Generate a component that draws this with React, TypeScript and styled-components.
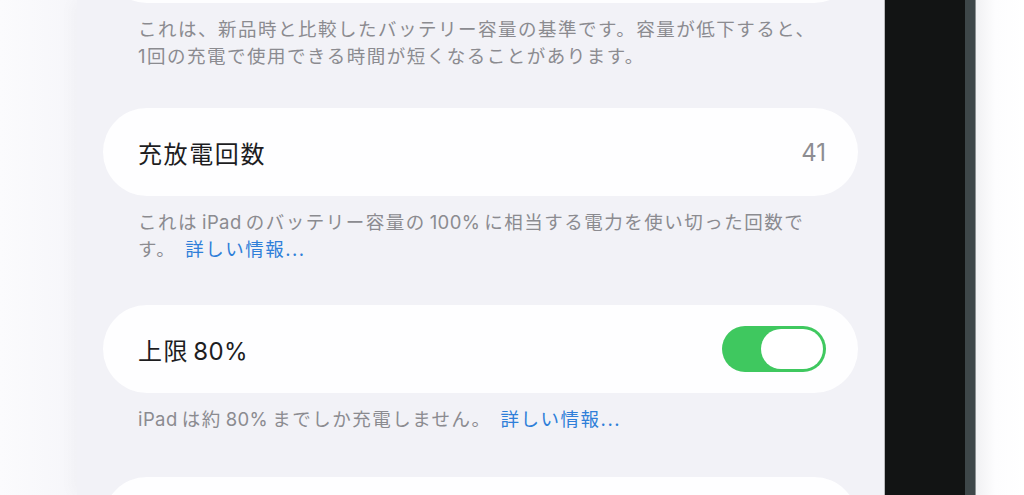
import React, { useState } from "react";
import styled, { createGlobalStyle } from "styled-components";

const GlobalStyle = createGlobalStyle`
  html, body {
    margin: 0;
    padding: 0;
    background: #f9f9fc;
  }
  body {
    font-family: Inter, "Noto Sans CJK JP", sans-serif;
    -webkit-font-smoothing: antialiased;
  }
`;

const Screen = styled.div`
  display: flex;
  width: 1024px;
  height: 495px;
  overflow: hidden;
  background: #f9f9fc;
`;

const Gutter = styled.div`
  width: 77px;
  flex-shrink: 0;
  background: linear-gradient(to right, #fbfbfd 0%, #f6f6fa 100%);
`;

const Panel = styled.div`
  width: 808px;
  flex-shrink: 0;
  padding: 0 26px 0 26px;
  box-sizing: border-box;
  background: #f2f2f7;
  border-right: 1px solid #b9babd;
  box-shadow: -6px 0 14px rgba(0, 0, 0, 0.025);
`;

const Bezel = styled.div`
  width: 80px;
  flex-shrink: 0;
  background: #121414;
`;

const BezelEdge = styled.div`
  width: 10px;
  flex-shrink: 0;
  background: #3e4749;
  border-right: 1px solid #8d9294;
`;

const Outside = styled.div`
  flex: 1;
  background: linear-gradient(to right, #f1f1f3 0%, #fdfdfe 40%, #ffffff 100%);
`;

const Section = styled.div<{ $first?: boolean; $gap?: number }>`
  margin-top: ${(p) => (p.$first ? "-85px" : "0")};
  margin-bottom: ${(p) => p.$gap ?? 41}px;
`;

const Card = styled.div`
  height: 88px;
  display: flex;
  align-items: center;
  justify-content: space-between;
  padding: 0 32px 0 35px;
  background: #fefeff;
  border-radius: 44px;
`;

const Title = styled.span`
  font-size: 24px;
  letter-spacing: 1.6px;
  color: #1d1d1f;
`;

const Value = styled.span`
  font-size: 24px;
  color: #8d8d92;
`;

const Footer = styled.p`
  margin: 0;
  padding: 13px 35px 0;
  font-size: 18.5px;
  line-height: 26.5px;
  letter-spacing: 1.5px;
  color: #8b8b90;
`;

// latin words sit between CJK text with a small gap on each side
const Latin = styled.span<{ $start?: boolean }>`
  margin: 0 4px 0 ${(p) => (p.$start ? 0 : 4)}px;
  letter-spacing: 0.4px;
`;

const Link = styled.a`
  color: #2f7fd9;
  text-decoration: none;
  margin-left: 9px;
`;

const Toggle = styled.button<{ $on: boolean }>`
  position: relative;
  width: 104px;
  height: 46px;
  padding: 0;
  border: none;
  border-radius: 23px;
  background: ${(p) => (p.$on ? "#3fc85f" : "#e4e4e9")};
  cursor: pointer;
`;

const Knob = styled.span<{ $on: boolean }>`
  position: absolute;
  top: 3px;
  ${(p) => (p.$on ? "right: 3px;" : "left: 3px;")}
  width: 62px;
  height: 40px;
  border-radius: 20px;
  background: #ffffff;
`;

export default function App() {
  const [limit, setLimit] = useState(true);

  return (
    <>
      <GlobalStyle />
      <Screen>
        <Gutter />
        <Panel>
          <Section $first $gap={39}>
            <Card />
            <Footer>
              これは、新品時と比較したバッテリー容量の基準です。容量が低下すると、
              <br />
              1回の充電で使用できる時間が短くなることがあります。
            </Footer>
          </Section>

          <Section $gap={43}>
            <Card>
              <Title>充放電回数</Title>
              <Value>41</Value>
            </Card>
            <Footer>
              これは<Latin>iPad</Latin>のバッテリー容量の<Latin>100%</Latin>
              に相当する電力を使い切った回数で
              <br />
              す。<Link href="#">詳しい情報...</Link>
            </Footer>
          </Section>

          <Section $gap={44}>
            <Card>
              <Title>
                上限<Latin>80%</Latin>
              </Title>
              <Toggle $on={limit} onClick={() => setLimit(!limit)}>
                <Knob $on={limit} />
              </Toggle>
            </Card>
            <Footer>
              <Latin $start>iPad</Latin>は約<Latin>80%</Latin>
              までしか充電しません。
              <Link href="#">詳しい情報...</Link>
            </Footer>
          </Section>

          <Section>
            <Card />
          </Section>
        </Panel>
        <Bezel />
        <BezelEdge />
        <Outside />
      </Screen>
    </>
  );
}
